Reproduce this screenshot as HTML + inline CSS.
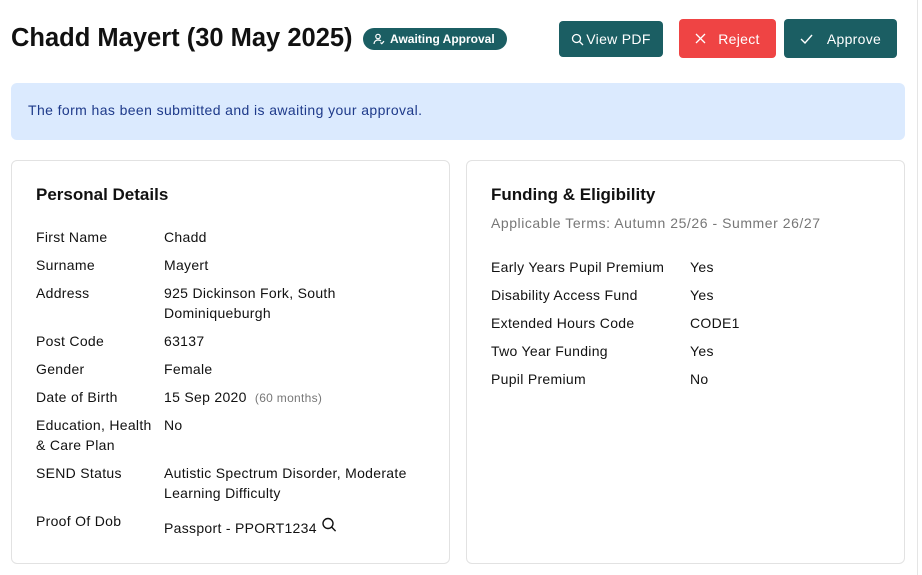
<!DOCTYPE html>
<html><head><meta charset="utf-8"><style>
*{box-sizing:border-box;margin:0;padding:0}
body{width:922px;height:575px;background:#fff;font-family:"Liberation Sans",sans-serif;color:#111;position:relative;overflow:hidden}
.a{position:absolute}
h1{position:absolute;left:11px;top:24px;font-size:25.5px;font-weight:bold;letter-spacing:0;color:#111}
.badge{left:363px;top:28px;width:144px;height:22px;background:#1b5e63;border-radius:11px;color:#fff;font-size:12px;font-weight:bold;display:flex;align-items:center;padding-left:10px;gap:5px}
.btn{position:absolute;color:#fff;font-size:14px;letter-spacing:0.3px;display:flex;align-items:center;justify-content:center;border-radius:4px;gap:6px}
.teal{background:#1b5e63}
.red{background:#ef4444}
.alert{left:11px;top:83px;width:894px;height:57px;background:#dbeafe;border-radius:6px;color:#1e3a8a;font-size:14px;letter-spacing:0.4px;padding:19px 0 0 17px}
.card{position:absolute;top:160px;height:404px;border:1px solid #e2e2e2;border-radius:6px;background:#fff}
.card h2{position:absolute;left:24px;top:24px;font-size:17px;font-weight:bold;color:#111}
.row{position:absolute;font-size:14px;line-height:20px;color:#111;letter-spacing:0.3px}
.muted{color:#777}
</style></head><body>
<h1>Chadd Mayert (30 May 2025)</h1>
<div class="a badge"><svg width="12" height="12" viewBox="0 0 12 12" fill="none" stroke="#fff" stroke-width="1.2"><circle cx="5" cy="3.5" r="2.2"/><path d="M1 11c0-2.5 2-4 4-4s2.5.5 3 1M7.5 9.5l1.3 1.2 2.2-2.5"/></svg>Awaiting Approval</div>
<div class="btn teal" style="left:559px;top:21px;width:104px;height:36px;gap:2px"><svg width="13" height="13" viewBox="0 0 13 13" fill="none" stroke="#fff" stroke-width="1.3"><circle cx="5.5" cy="5.5" r="4"/><path d="M8.5 8.5l3.5 3.5"/></svg>View PDF</div>
<div class="btn red" style="left:679px;top:19px;width:97px;height:39px;gap:12px"><svg width="11" height="11" viewBox="0 0 11 11" stroke="#fff" stroke-width="1.3"><path d="M1 1l9 9M10 1l-9 9"/></svg>Reject</div>
<div class="btn teal" style="left:784px;top:19px;width:113px;height:39px;gap:14px"><svg width="13" height="11" viewBox="0 0 13 11" fill="none" stroke="#fff" stroke-width="1.4"><path d="M1 6l4 4 7-8"/></svg>Approve</div>
<div class="a" style="left:917px;top:0;width:1px;height:575px;background:#e5e5e5"></div>
<div class="a alert">The form has been submitted and is awaiting your approval.</div>
<div class="card" style="left:11px;width:439px">
<h2>Personal Details</h2>
</div>
<div class="card" style="left:466px;width:439px">
<h2>Funding &amp; Eligibility</h2>
<div class="row muted" style="left:24px;top:52px;letter-spacing:0.55px">Applicable Terms: Autumn 25/26 - Summer 26/27</div>
</div>
<div class="row" style="left:36px;top:227px">First Name</div><div class="row" style="left:164px;top:227px">Chadd</div>
<div class="row" style="left:36px;top:255px">Surname</div><div class="row" style="left:164px;top:255px">Mayert</div>
<div class="row" style="left:36px;top:283px">Address</div><div class="row" style="left:164px;top:283px">925 Dickinson Fork, South<br>Dominiqueburgh</div>
<div class="row" style="left:36px;top:331px">Post Code</div><div class="row" style="left:164px;top:331px">63137</div>
<div class="row" style="left:36px;top:359px">Gender</div><div class="row" style="left:164px;top:359px">Female</div>
<div class="row" style="left:36px;top:387px">Date of Birth</div><div class="row" style="left:164px;top:387px">15 Sep 2020 <span class="muted" style="font-size:12px;margin-left:4px">(60 months)</span></div>
<div class="row" style="left:36px;top:415px">Education, Health<br>&amp; Care Plan</div><div class="row" style="left:164px;top:415px">No</div>
<div class="row" style="left:36px;top:463px">SEND Status</div><div class="row" style="left:164px;top:463px">Autistic Spectrum Disorder, Moderate<br>Learning Difficulty</div>
<div class="row" style="left:36px;top:511px">Proof Of Dob</div><div class="row" style="left:164px;top:517px">Passport - PPORT1234 <svg width="16" height="16" viewBox="0 0 16 16" fill="none" stroke="#111" stroke-width="1.4" style="vertical-align:0px"><circle cx="7" cy="6.5" r="5"/><path d="M10.8 10.3l3.8 3.8"/></svg></div>
<div class="row" style="left:491px;top:257px">Early Years Pupil Premium</div><div class="row" style="left:690px;top:257px">Yes</div>
<div class="row" style="left:491px;top:285px">Disability Access Fund</div><div class="row" style="left:690px;top:285px">Yes</div>
<div class="row" style="left:491px;top:313px">Extended Hours Code</div><div class="row" style="left:690px;top:313px">CODE1</div>
<div class="row" style="left:491px;top:341px">Two Year Funding</div><div class="row" style="left:690px;top:341px">Yes</div>
<div class="row" style="left:491px;top:369px">Pupil Premium</div><div class="row" style="left:690px;top:369px">No</div>
</body></html>
